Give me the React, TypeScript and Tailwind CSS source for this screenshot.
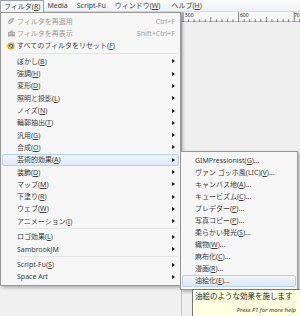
import React from 'react';

type Item =
  | { sep: true }
  | {
      sep?: false;
      label: string;
      shortcut?: string;
      disabled?: boolean;
      icon?: 'apply' | 'show' | 'reset';
      sub?: boolean;
      active?: boolean;
    };

const mainItems: Item[] = [
  { label: 'フィルタを再適用', shortcut: 'Ctrl+F', disabled: true, icon: 'apply' },
  { label: 'フィルタを再表示', shortcut: 'Shift+Ctrl+F', disabled: true, icon: 'show' },
  { label: 'すべてのフィルタをリセット(_F)', icon: 'reset' },
  { sep: true },
  { label: 'ぼかし(_B)', sub: true },
  { label: '強調(_H)', sub: true },
  { label: '変形(_D)', sub: true },
  { label: '照明と投影(_L)', sub: true },
  { label: 'ノイズ(_N)', sub: true },
  { label: '輪郭抽出(_T)', sub: true },
  { label: '汎用(_G)', sub: true },
  { label: '合成(_O)', sub: true },
  { label: '芸術的効果(_A)', sub: true, active: true },
  { label: '装飾(_D)', sub: true },
  { label: 'マップ(_M)', sub: true },
  { label: '下塗り(_R)', sub: true },
  { label: 'ウェブ(_W)', sub: true },
  { label: 'アニメーション(_I)', sub: true },
  { sep: true },
  { label: 'ロゴ効果(_L)', sub: true },
  { label: 'SambrookJM', sub: true },
  { sep: true },
  { label: 'Script-Fu(_S)', sub: true },
  { label: 'Space Art', sub: true },
];

const artItems = [
  'GIMPressionist(_G)...',
  'ヴァン ゴッホ風(LIC)(_V)...',
  'キャンバス地(_A)...',
  'キュービズム(_C)...',
  'プレデター(_P)...',
  '写真コピー(_P)...',
  '柔らかい発光(_S)...',
  '織物(_W)...',
  '麻布化(_C)...',
  '漫画(_R)...',
  '油絵化(_E)...',
];

// "_X" marks the underlined access key, as GIMP writes it
function Label({ text }: { text: string }) {
  const i = text.indexOf('_');
  if (i < 0) return <>{text}</>;
  return (
    <>
      {text.slice(0, i)}
      <u className="decoration-[0.5px] underline-offset-[1px]">{text[i + 1]}</u>
      {text.slice(i + 2)}
    </>
  );
}

function MenuIcon({ kind }: { kind: 'apply' | 'show' | 'reset' }) {
  if (kind === 'apply') {
    return (
      <svg width="8" height="8" viewBox="0 0 8 8">
        <path d="M1 6.5 C1 3 3 1 7 1 C7 4.5 5 7 1.5 7 Z" fill="#b4b4b4" />
        <path d="M1.5 6.5 L5 3" stroke="#e6e6e6" strokeWidth="0.8" />
      </svg>
    );
  }
  if (kind === 'show') {
    return (
      <svg width="9" height="8" viewBox="0 0 9 8">
        <rect x="1" y="3" width="7" height="4.5" fill="#aaaaaa" />
        <path d="M2 3 L4.5 0.8 L7 3 Z" fill="#bdbdbd" />
        <rect x="2" y="4" width="1.5" height="1.5" fill="#d8d8d8" />
        <rect x="5.5" y="4" width="1.5" height="1.5" fill="#d8d8d8" />
      </svg>
    );
  }
  return (
    <svg width="8" height="8" viewBox="0 0 8 8">
      <circle cx="4" cy="4" r="3.3" fill="#f2c230" stroke="#c98a10" strokeWidth="0.6" />
      <path d="M2.4 4 A1.7 1.7 0 1 1 4 5.7" fill="none" stroke="#2f6fc2" strokeWidth="1.1" />
      <path d="M1.4 3.4 L2.4 5 L3.5 3.6 Z" fill="#2f6fc2" />
    </svg>
  );
}

function Arrow() {
  return <span className="ml-auto h-0 w-0 border-y-[2.5px] border-l-[3px] border-y-transparent border-l-[#1a1a1a]" />;
}

function Ruler() {
  const ticks = [];
  for (let i = 0; i < 22; i++) {
    const x = 1 + i * 5.56;
    const major = i % 10 === 0;
    const mid = i % 5 === 0;
    ticks.push(
      <line key={i} x1={x} x2={x} y1={major ? 0 : mid ? 5 : 7} y2={10} stroke="#333" strokeWidth="0.6" />
    );
  }
  return (
    <div className="relative h-[10px] border-b border-[#b9b9b9] bg-[#f7f7f7]">
      <svg className="absolute inset-0" width="120" height="10">
        {ticks}
      </svg>
      <span className="absolute left-[3px] top-0 text-[5px] leading-[6px] text-[#222]">500</span>
      <span className="absolute left-[58px] top-0 text-[5px] leading-[6px] text-[#222]">600</span>
      <span className="absolute left-[112px] top-0 text-[5px] leading-[6px] text-[#222]">70</span>
    </div>
  );
}

export default function App() {
  return (
    <div
      className="relative flex h-[316px] w-[300px] flex-col overflow-hidden bg-[#f0f0f0] text-[7px] text-[#3c3c3c]"
      style={{ fontFamily: '"Noto Sans", "Noto Sans CJK JP", sans-serif' }}
    >
      {/* menu bar */}
      <div className="flex h-[12px] items-center border-b border-[#d9dde3] bg-gradient-to-b from-[#fbfcfd] to-[#eef1f5] leading-none">
        <span className="flex h-[12px] items-center border border-b-0 border-[#9aa3ad] bg-[#f4f6f8] px-[3px]">
          フィルタ(<u className="decoration-[0.5px] underline-offset-[1px]">R</u>)
        </span>
        <span className="ml-[2px] px-[1px]">Media</span>
        <span className="ml-[7px] px-[1px]">Script-Fu</span>
        <span className="ml-[7px] px-[1px]">
          ウィンドウ(<u className="decoration-[0.5px] underline-offset-[1px]">W</u>)
        </span>
        <span className="ml-[9px] px-[1px]">
          ヘルプ(<u className="decoration-[0.5px] underline-offset-[1px]">H</u>)
        </span>
      </div>

      {/* workspace */}
      <div className="flex flex-1">
        <div className="w-[181px]" />
        <div className="flex flex-1 flex-col border-l border-[#c4c4c4]">
          <Ruler />
          <div className="flex-1 bg-[#efefef]" />
        </div>
      </div>

      {/* filters menu */}
      <div className="absolute left-0 top-[12px] w-[181px] border border-[#979797] bg-[#f6f6f6] px-[1px] py-[2px] shadow-[2px_2px_3px_rgba(0,0,0,0.25)]">
        {mainItems.map((item, idx) =>
          item.sep ? (
            <div key={idx} className="flex h-[3.3px] items-center pl-[16px] pr-[2px]">
              <div className="h-px w-full bg-[#e4e4e4]" />
            </div>
          ) : (
            <div
              key={idx}
              className={`flex h-[12.3px] items-center whitespace-nowrap pl-[2px] pr-[3px] leading-none ${
                item.active
                  ? 'rounded-[2px] border border-[#b8d0ee] bg-gradient-to-b from-[#f1f6fc] to-[#dde8f6]'
                  : 'border border-transparent'
              } ${item.disabled ? 'text-[#9a9a9a]' : ''}`}
            >
              <span className="flex w-[12px] justify-center">{item.icon && <MenuIcon kind={item.icon} />}</span>
              <Label text={item.label} />
              {item.shortcut && <span className="ml-auto text-[#a0a0a0]">{item.shortcut}</span>}
              {item.sub && <Arrow />}
            </div>
          )
        )}
      </div>

      {/* artistic submenu */}
      <div className="absolute left-[180px] top-[151px] w-[118px] border border-[#979797] bg-[#f6f6f6] px-[1px] py-[2px] shadow-[2px_2px_3px_rgba(0,0,0,0.25)]">
        {artItems.map((t, idx) => (
          <div
            key={idx}
            className={`flex h-[12.1px] items-center whitespace-nowrap pl-[12px] leading-none ${
              idx === artItems.length - 1
                ? 'rounded-[2px] border border-[#b8d0ee] bg-gradient-to-b from-[#f1f6fc] to-[#dde8f6]'
                : 'border border-transparent'
            }`}
          >
            <Label text={t} />
          </div>
        ))}
      </div>

      {/* tooltip */}
      <div className="absolute left-[192px] top-[289px] flex h-[30px] w-[110px] flex-col border border-[#767676] bg-[#ffffe1] pl-[2px] pr-[5px] pt-[1px] leading-none text-[#1a1a1a]">
        <span className="h-[10px] text-[7.5px] leading-[10px]">油絵のような効果を施します</span>
        <span className="mt-[5px] self-end text-[6px] italic leading-[8px] text-[#333]">Press F1 for more help</span>
      </div>
    </div>
  );
}
